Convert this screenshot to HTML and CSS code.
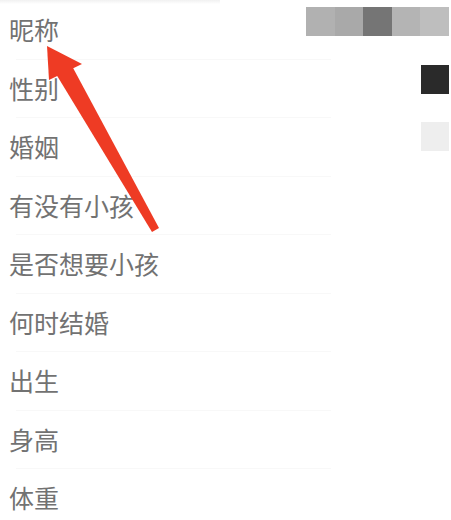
FILE: index.html
```html
<!DOCTYPE html>
<html lang="zh">
<head>
<meta charset="utf-8">
<title>资料</title>
<link rel="stylesheet" href="styles.css">
</head>
<body>
<div class="page">
  <ul class="list">
    <li class="row"><span class="label">昵称</span>
      <span class="mosaic"><i class="m1"></i><i class="m2"></i><i class="m3"></i><i class="m4"></i><i class="m5"></i></span>
    </li>
    <li class="row"><span class="label">性别</span><span class="swatch dark"></span></li>
    <li class="row"><span class="label">婚姻</span><span class="swatch light"></span></li>
    <li class="row"><span class="label">有没有小孩</span></li>
    <li class="row"><span class="label">是否想要小孩</span></li>
    <li class="row"><span class="label">何时结婚</span></li>
    <li class="row"><span class="label">出生</span></li>
    <li class="row"><span class="label">身高</span></li>
    <li class="row"><span class="label">体重</span></li>
  </ul>
  <svg class="arrow" width="451" height="520" viewBox="0 0 451 520" aria-hidden="true">
    <polygon points="47,46 82,64 49,80" fill="#ee3b24"/>
    <polygon points="56,74 72,66 159,228 152,232" fill="#ee3b24"/>
  </svg>
</div>
</body>
</html>
```
FILE: styles.css
```css
html, body {
  margin: 0;
  padding: 0;
  background: #ffffff;
}
.page {
  position: relative;
  width: 451px;
  height: 520px;
  overflow: hidden;
  font-family: "Noto Sans CJK SC", "Noto Sans", sans-serif;
}
.list {
  list-style: none;
  margin: 0;
  padding: 0;
  background: linear-gradient(#f1f1f1, #ffffff) 0 0 / 220px 4px no-repeat;
}
.row {
  display: flex;
  justify-content: space-between;
  align-items: center;
  height: 58.5px;
  box-sizing: border-box;
  padding: 0 2px 0 9px;
  position: relative;
}
.row + .row::before {
  content: "";
  position: absolute;
  left: 16px;
  right: 120px;
  top: 0;
  height: 1px;
  background: #f8f8f8;
}
.label {
  font-size: 25px;
  color: #727272;
  line-height: 58px;
}
.mosaic {
  display: flex;
  align-self: flex-start;
  margin-top: 7px;
  height: 29px;
}
.mosaic i {
  display: block;
  width: 28.6px;
  height: 29px;
}
.m1 { background: #b1b1b1; }
.m2 { background: #a9a9a9; }
.m3 { background: #757575; }
.m4 { background: #b4b4b4; }
.m5 { background: #bebebe; }
.swatch {
  align-self: flex-start;
  margin-top: 6px;
  width: 28px;
  height: 29px;
}
.swatch.dark { background: #2a2a2a; }
.swatch.light { background: #eeeeee; margin-top: 5px; }
.arrow {
  position: absolute;
  left: 0;
  top: 0;
  pointer-events: none;
}
```
